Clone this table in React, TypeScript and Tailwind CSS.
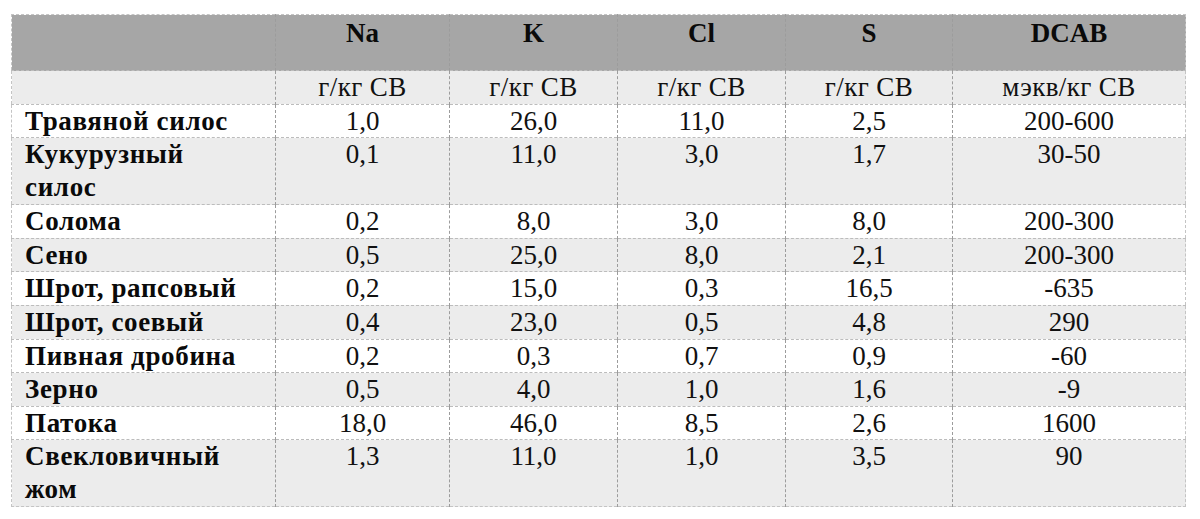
import React from "react";

const rows: { name: string; vals: string[]; two?: boolean; gray?: boolean }[] = [
  { name: "Травяной силос", vals: ["1,0", "26,0", "11,0", "2,5", "200-600"] },
  { name: "Кукурузный силос", vals: ["0,1", "11,0", "3,0", "1,7", "30-50"], two: true, gray: true },
  { name: "Солома", vals: ["0,2", "8,0", "3,0", "8,0", "200-300"] },
  { name: "Сено", vals: ["0,5", "25,0", "8,0", "2,1", "200-300"], gray: true },
  { name: "Шрот, рапсовый", vals: ["0,2", "15,0", "0,3", "16,5", "-635"] },
  { name: "Шрот, соевый", vals: ["0,4", "23,0", "0,5", "4,8", "290"], gray: true },
  { name: "Пивная дробина", vals: ["0,2", "0,3", "0,7", "0,9", "-60"] },
  { name: "Зерно", vals: ["0,5", "4,0", "1,0", "1,6", "-9"], gray: true },
  { name: "Патока", vals: ["18,0", "46,0", "8,5", "2,6", "1600"] },
  { name: "Свекловичный жом", vals: ["1,3", "11,0", "1,0", "3,5", "90"], two: true, gray: true },
];

const heads = ["Na", "K", "Cl", "S", "DCAB"];
const units = ["г/кг СВ", "г/кг СВ", "г/кг СВ", "г/кг СВ", "мэкв/кг СВ"];

const font = "font-['Liberation_Serif','Times_New_Roman',serif] text-[27px] leading-[32.6px]";
const vBorder = "border-l border-dashed border-l-[#9c9c9c]";

export default function App() {
  return (
    <div className={`w-[1200px] h-[519px] bg-white pt-[14px] pl-[11px] text-[#111] ${font}`}>
      <table className={`table-fixed border-collapse w-[1174px] border border-dashed border-[#c4c4c4] ${font}`}>
        <colgroup>
          <col className="w-[264px]" />
          <col className="w-[174px]" />
          <col className="w-[168px]" />
          <col className="w-[168px]" />
          <col className="w-[167px]" />
          <col className="w-[233px]" />
        </colgroup>
        <thead>
          <tr className="h-[56px] bg-[#a6a6a6]">
            <th className="p-0"></th>
            {heads.map((h) => (
              <th key={h} className={`p-0 pt-[2px] align-top text-center font-bold text-[#0a0a0a] ${font} ${vBorder}`}>
                {h}
              </th>
            ))}
          </tr>
          <tr className="h-[33px] bg-[#ececec] border-t border-dashed border-t-[#bcbcbc]">
            <td className="p-0"></td>
            {units.map((u, i) => (
              <td key={i} className={`p-0 align-top text-center font-normal tracking-[0.4px] text-[#111] ${font} ${vBorder}`}>
                {u}
              </td>
            ))}
          </tr>
        </thead>
        <tbody>
          {rows.map((r) => (
            <tr
              key={r.name}
              className={`${r.two ? "h-[67px]" : "h-[33.6px]"} ${r.gray ? "bg-[#ececec]" : "bg-white"} border-t border-dashed border-t-[#bcbcbc]`}
            >
              <td className={`p-0 pl-[13px] align-top font-bold tracking-[0.65px] text-[#0a0a0a] ${font}`}>
                {r.two ? (
                  <>
                    {r.name.split(" ")[0]}
                    <br />
                    {r.name.split(" ")[1]}
                  </>
                ) : (
                  <span className="whitespace-nowrap">{r.name}</span>
                )}
              </td>
              {r.vals.map((v, i) => (
                <td key={i} className={`p-0 align-top text-center text-[#111] ${font} ${vBorder}`}>
                  {v}
                </td>
              ))}
            </tr>
          ))}
        </tbody>
      </table>
    </div>
  );
}
